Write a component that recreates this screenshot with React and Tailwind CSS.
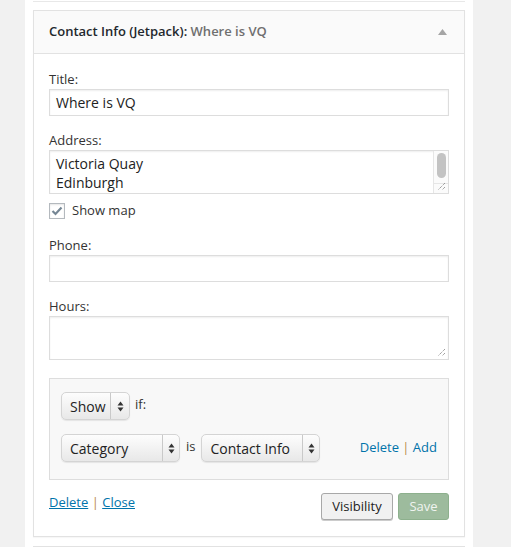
const FONT = { fontFamily: '"Open Sans", "Liberation Sans", sans-serif' };

function Grip() {
  return (
    <svg width="9" height="9" viewBox="0 0 9 9" className="absolute right-[2px] bottom-[2px]">
      <path d="M8 1 L1 8 M8 5 L5 8" stroke="#777" strokeWidth="1" strokeDasharray="1 1" />
    </svg>
  );
}

function Arrows() {
  return (
    <svg width="7" height="11" viewBox="0 0 7 11">
      <path d="M3.5 0.5 L6.5 4.5 L0.5 4.5 Z" fill="#333" />
      <path d="M0.5 6.5 L6.5 6.5 L3.5 10.5 Z" fill="#333" />
    </svg>
  );
}

function Select({ label, width, arrowAt }) {
  return (
    <div
      className="relative h-[28px] flex items-center rounded-[5px] border border-[#d4d4d4] bg-gradient-to-b from-[#fdfdfd] to-[#e8e8e8] shadow-[0_1px_1px_rgba(0,0,0,0.08)] text-[14px] text-[#222]"
      style={{ width }}
    >
      <span className="pl-[8px]">{label}</span>
      <div
        className="absolute top-0 bottom-0 right-0 border-l border-[#c9c9c9] flex items-center justify-center"
        style={{ left: arrowAt }}
      >
        <Arrows />
      </div>
    </div>
  );
}

function Label({ children, className = '' }) {
  return <div className={`text-[13px] leading-[18px] text-[#333] mb-px ${className}`}>{children}</div>;
}

export default function App() {
  return (
    <div className="w-[511px] h-[547px] overflow-hidden flex bg-[#f1f1f1]" style={FONT}>
      <div className="w-[25px] shrink-0" />
      <div className="w-[448px] shrink-0 bg-white px-[8px]">
        <div className="h-[2px] border-b border-[#e8e8e8]" />

        <div className="mt-[8px] border border-[#e2e2e2] shadow-[0_1px_1px_rgba(0,0,0,0.03)]">
          {/* header */}
          <div className="h-[43px] bg-[#fafafa] border-b border-[#e2e2e2] flex items-center justify-between pl-[15px] pr-[17px]">
            <div className="text-[13px] text-[#23282d] font-semibold">
              <span>Contact Info (Jetpack):</span>
              <span className="text-[#6f6f6f]"> Where is VQ</span>
            </div>
            <svg width="9" height="6" viewBox="0 0 9 6">
              <path d="M4.5 0 L9 6 L0 6 Z" fill="#a5a5a5" />
            </svg>
          </div>

          {/* body */}
          <div className="px-[15px] pt-[16px] pb-[16px]">
            <Label>Title:</Label>
            <div className="h-[27px] border border-[#ddd] shadow-[inset_0_1px_2px_rgba(0,0,0,0.07)] flex items-center px-[6px] text-[14px] text-[#222]">
              Where is VQ
            </div>

            <Label className="mt-[15px]">Address:</Label>
            <div className="relative h-[44px] border border-[#ddd] shadow-[inset_0_1px_2px_rgba(0,0,0,0.07)] text-[14px] leading-[19px] text-[#222] pl-[6px] pt-[3px]">
              <div>Victoria Quay</div>
              <div>Edinburgh</div>
              <div className="absolute top-0 right-0 bottom-0 w-[15px] border-l border-[#e6e6e6] bg-[#fbfbfb] flex flex-col">
                <div className="flex-1 flex justify-center pt-[2px]">
                  <div className="w-[9px] h-[25px] rounded-full bg-[#c3c3c3]" />
                </div>
                <div className="h-[10px] border-t border-[#e6e6e6]" />
              </div>
              <Grip />
            </div>

            <div className="mt-[9px] h-[16px] flex items-center gap-[7px]">
              <div className="w-[16px] h-[16px] border border-[#b4b9be] shadow-[inset_0_1px_2px_rgba(0,0,0,0.1)] flex items-center justify-center">
                <svg width="12" height="10" viewBox="0 0 12 10">
                  <path d="M1.5 5 L4.5 8 L10.5 1.5" stroke="#758694" strokeWidth="2.2" fill="none" />
                </svg>
              </div>
              <span className="text-[13px] text-[#333]">Show map</span>
            </div>

            <Label className="mt-[17px]">Phone:</Label>
            <div className="h-[27px] border border-[#ddd] shadow-[inset_0_1px_2px_rgba(0,0,0,0.07)]" />

            <Label className="mt-[15px]">Hours:</Label>
            <div className="relative h-[44px] border border-[#ddd] shadow-[inset_0_1px_2px_rgba(0,0,0,0.07)]">
              <Grip />
            </div>

            {/* conditions */}
            <div className="mt-[18px] h-[102px] border border-[#ddd] bg-[#f8f8f8] pl-[11px] pr-[11px] pt-[13px]">
              <div className="flex items-center gap-[5px]">
                <Select label="Show" width={69} arrowAt={48} />
                <span className="text-[13px] text-[#333] -mt-[3px]">if:</span>
              </div>
              <div className="mt-[14px] flex items-center">
                <Select label="Category" width={119} arrowAt={100} />
                <span className="text-[13px] text-[#333] mx-[6px] -mt-[2px]">is</span>
                <Select label="Contact Info" width={119} arrowAt={100} />
                <div className="ml-auto text-[13px] text-[#0073aa]">
                  Delete <span className="text-[#b98b47]">|</span> Add
                </div>
              </div>
            </div>

            {/* footer */}
            <div className="mt-[13px] flex items-start justify-between">
              <div className="text-[13px] text-[#0073aa]">
                <span className="underline">Delete</span> <span className="text-[#b98b47]">|</span>{' '}
                <span className="underline">Close</span>
              </div>
              <div className="flex gap-[5px]">
                <div className="h-[27px] w-[72px] rounded-[3px] border border-[#a8a8a8] bg-[#f1f1f1] shadow-[0_1px_0_#ccc] flex items-center justify-center text-[13px] text-[#222]">
                  Visibility
                </div>
                <div className="h-[27px] w-[51px] rounded-[3px] border border-[#8db08d] bg-[#9dbb9d] flex items-center justify-center text-[13px] text-[#f0f4f0]">
                  Save
                </div>
              </div>
            </div>
          </div>
        </div>

        <div className="mt-[9px] h-[10px] border border-[#e2e2e2] border-b-0" />
      </div>
    </div>
  );
}
